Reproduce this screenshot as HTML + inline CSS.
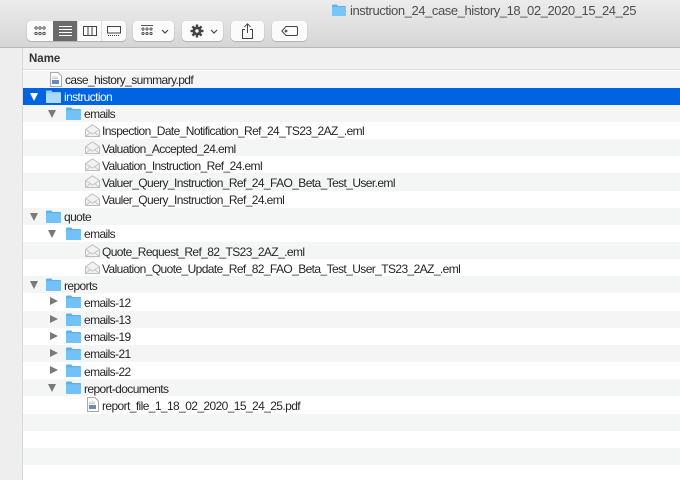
<!DOCTYPE html>
<html><head><meta charset="utf-8">
<style>
*{margin:0;padding:0;box-sizing:border-box}
body{width:680px;height:480px;overflow:hidden;font-family:"Liberation Sans",Arial,sans-serif;background:#fff;position:relative;font-size:12px;color:#262626}
#tb{position:absolute;left:0;top:0;width:680px;height:48px;background:linear-gradient(#ececec,#d6d6d6);border-bottom:1px solid #b8b8b8}
.title{position:absolute;left:350px;top:3px;font-size:13px;color:#4d4d4d;letter-spacing:-0.42px}
.tfold{position:absolute;left:332px;top:4px}
.btn{position:absolute;top:21px;height:20px;background:#fbfbfb;border-radius:4px;box-shadow:0 0.5px 1px rgba(0,0,0,.35);}
.btn svg{position:absolute}
#side{position:absolute;left:0;top:48px;width:23px;height:432px;background:#eeeeee;border-right:1px solid #d8d8d8}
#hdr{position:absolute;left:23px;top:48px;width:657px;height:22px;background:#f1f1f1;border-bottom:1px solid #dcdcdc}
#hdr span{position:absolute;left:6px;top:5px;font-size:11.5px;font-weight:bold;color:#333}
.row{position:absolute;left:23px;width:657px;height:17.15px}
.g{background:#f4f5f5}
.sel{background:#0063e1;color:#fff}
.row span{position:absolute;top:2.5px;white-space:nowrap;letter-spacing:-0.6px}
.row svg{position:absolute}
.tri{position:absolute;top:5px;width:0;height:0;border-left:4.5px solid transparent;border-right:4.5px solid transparent;border-top:8px solid #7a7a7a}
.sel .tri{border-top-color:#fff}
.trr{position:absolute;top:4px;width:0;height:0;border-top:4.5px solid transparent;border-bottom:4.5px solid transparent;border-left:8px solid #7a7a7a}
</style></head><body>
<div id="tb">
<svg class="tfold" width="14" height="12" viewBox="0 0 14 12"><path d="M0 1.5Q0 0.5 1 0.5H5L6 2H13Q14 2 14 3V11Q14 12 13 12H1Q0 12 0 11Z" fill="#5db5ef"/><rect x="0" y="3" width="14" height="9" rx="1" fill="#78c6f6"/></svg>
<div class="title">instruction_24_case_history_18_02_2020_15_24_25</div>
<div class="btn" style="left:27px;width:99px">
<svg style="left:7px;top:5px" width="12" height="10" viewBox="0 0 12 10" fill="none" stroke="#444" stroke-width="0.9"><circle cx="2" cy="2" r="1.2"/><circle cx="6" cy="2" r="1.2"/><circle cx="10" cy="2" r="1.2"/><circle cx="2" cy="7.5" r="1.2"/><circle cx="6" cy="7.5" r="1.2"/><circle cx="10" cy="7.5" r="1.2"/></svg>
<div style="position:absolute;left:26px;top:0;width:24px;height:20px;background:#6b6b6b"></div>
<svg style="left:32px;top:5px" width="13" height="10" viewBox="0 0 13 10" stroke="#fff" stroke-width="1"><path d="M0 0.5H13M0 3.5H13M0 6.5H13M0 9.5H13"/></svg>
<svg style="left:56px;top:5px" width="14" height="10" viewBox="0 0 14 10" fill="none" stroke="#444" stroke-width="1"><rect x="0.5" y="0.5" width="13" height="9"/><path d="M5 0.5V9.5M9 0.5V9.5"/></svg>
<svg style="left:80px;top:5px" width="14" height="11" viewBox="0 0 14 11" fill="none" stroke="#444" stroke-width="1"><rect x="0.5" y="0.5" width="13" height="6.5"/><path d="M1 9.5H13" stroke-dasharray="1 1"/></svg>
<div style="position:absolute;left:50px;top:0;width:1px;height:20px;background:#ddd"></div>
<div style="position:absolute;left:74px;top:0;width:1px;height:20px;background:#ddd"></div>
</div>
<div class="btn" style="left:133px;width:41px">
<svg style="left:8px;top:4px" width="12" height="12" viewBox="0 0 12 12" fill="none" stroke="#444" stroke-width="0.9"><path d="M0 0.5H12"/><circle cx="2" cy="4" r="1.1"/><circle cx="6" cy="4" r="1.1"/><circle cx="10" cy="4" r="1.1"/><circle cx="2" cy="8.5" r="1.1"/><circle cx="6" cy="8.5" r="1.1"/><circle cx="10" cy="8.5" r="1.1"/></svg>
<svg style="left:28px;top:8px" width="8" height="5" viewBox="0 0 8 5" fill="none" stroke="#444" stroke-width="1.2"><path d="M1 1L4 4L7 1"/></svg>
</div>
<div class="btn" style="left:182px;width:41px">
<svg style="left:8px;top:3px" width="14" height="14" viewBox="0 0 14 14"><g fill="#444"><circle cx="7" cy="7" r="4.5"/><rect x="5.8" y="0.5" width="2.4" height="13"/><rect x="0.5" y="5.8" width="13" height="2.4"/><rect x="5.8" y="0.5" width="2.4" height="13" transform="rotate(45 7 7)"/><rect x="5.8" y="0.5" width="2.4" height="13" transform="rotate(-45 7 7)"/></g><circle cx="7" cy="7" r="1.7" fill="#fbfbfb"/></svg>
<svg style="left:28px;top:8px" width="8" height="5" viewBox="0 0 8 5" fill="none" stroke="#444" stroke-width="1.2"><path d="M1 1L4 4L7 1"/></svg>
</div>
<div class="btn" style="left:231px;width:33px">
<svg style="left:10px;top:2px" width="13" height="16" viewBox="0 0 13 16" fill="none" stroke="#444" stroke-width="1"><path d="M4 6.5H1.5V15.5H11.5V6.5H9M6.5 10V1M3.5 3.8L6.5 0.8L9.5 3.8"/></svg>
</div>
<div class="btn" style="left:272px;width:35px">
<svg style="left:9px;top:5px" width="17" height="10" viewBox="0 0 17 10" fill="none" stroke="#444" stroke-width="1"><path d="M5 0.5H15Q16.5 0.5 16.5 2V8Q16.5 9.5 15 9.5H5L0.8 5Z"/><circle cx="5" cy="5" r="0.9"/></svg>
</div>
</div>
<div id="side"></div>
<div id="hdr"><span>Name</span></div>

<svg width="0" height="0" style="position:absolute">
<defs>
<symbol id="fold" viewBox="0 0 15 13"><path d="M0 1.5Q0 0.5 1 0.5H5.5L6.5 2H14Q15 2 15 3V12Q15 13 14 13H1Q0 13 0 12Z" fill="#5db2ec"/><rect x="0" y="3.2" width="15" height="9.8" rx="0.8" fill="#74c2f5"/></symbol>
<symbol id="foldS" viewBox="0 0 15 13"><path d="M0 1.5Q0 0.5 1 0.5H5.5L6.5 2H14Q15 2 15 3V12Q15 13 14 13H1Q0 13 0 12Z" fill="#8fcdf7"/><rect x="0" y="3.2" width="15" height="9.8" rx="0.8" fill="#a9dafa"/></symbol>
<symbol id="env" viewBox="0 0 15 13"><path d="M0.5 5.5L7.5 0.8L14.5 5.5V12.5H0.5Z" fill="#f2f2f2" stroke="#bdbdbd"/><path d="M0.5 5.5L7.5 10L14.5 5.5M0.5 12.5L5.5 8.5M14.5 12.5L9.5 8.5" fill="none" stroke="#c4c4c4"/></symbol>
<symbol id="pdf" viewBox="0 0 12 15"><path d="M0.5 0.5H8L11.5 4V14.5H0.5Z" fill="#fff" stroke="#aaa"/><rect x="2" y="8" width="7" height="4" fill="#6b8bb5"/><path d="M2 5H8M2 6.5H8" stroke="#ccc"/></symbol>
</defs></svg>

<div class="row g" style="top:70.5px"><svg style="left:27px;top:1px" width="12" height="15"><use href="#pdf"/></svg><span style="left:42px">case_history_summary.pdf</span></div>
<div class="row sel" style="top:87.65px"><div class="tri" style="left:7px"></div><svg style="left:23px;top:2px" width="15" height="13"><use href="#foldS"/></svg><span style="left:41px">instruction</span></div>
<div class="row g" style="top:104.8px"><div class="tri" style="left:25px"></div><svg style="left:43px;top:2px" width="15" height="13"><use href="#fold"/></svg><span style="left:61px">emails</span></div>
<div class="row" style="top:121.95px"><svg style="left:62px;top:2px" width="15" height="13"><use href="#env"/></svg><span style="left:79px">Inspection_Date_Notification_Ref_24_TS23_2AZ_.eml</span></div>
<div class="row g" style="top:139.1px"><svg style="left:62px;top:2px" width="15" height="13"><use href="#env"/></svg><span style="left:79px">Valuation_Accepted_24.eml</span></div>
<div class="row" style="top:156.25px"><svg style="left:62px;top:2px" width="15" height="13"><use href="#env"/></svg><span style="left:79px">Valuation_Instruction_Ref_24.eml</span></div>
<div class="row g" style="top:173.4px"><svg style="left:62px;top:2px" width="15" height="13"><use href="#env"/></svg><span style="left:79px">Valuer_Query_Instruction_Ref_24_FAO_Beta_Test_User.eml</span></div>
<div class="row" style="top:190.55px"><svg style="left:62px;top:2px" width="15" height="13"><use href="#env"/></svg><span style="left:79px">Vauler_Query_Instruction_Ref_24.eml</span></div>
<div class="row g" style="top:207.7px"><div class="tri" style="left:7px"></div><svg style="left:23px;top:2px" width="15" height="13"><use href="#fold"/></svg><span style="left:41px">quote</span></div>
<div class="row" style="top:224.85px"><div class="tri" style="left:25px"></div><svg style="left:43px;top:2px" width="15" height="13"><use href="#fold"/></svg><span style="left:61px">emails</span></div>
<div class="row g" style="top:242px"><svg style="left:62px;top:2px" width="15" height="13"><use href="#env"/></svg><span style="left:79px">Quote_Request_Ref_82_TS23_2AZ_.eml</span></div>
<div class="row" style="top:259.15px"><svg style="left:62px;top:2px" width="15" height="13"><use href="#env"/></svg><span style="left:79px">Valuation_Quote_Update_Ref_82_FAO_Beta_Test_User_TS23_2AZ_.eml</span></div>
<div class="row g" style="top:276.3px"><div class="tri" style="left:7px"></div><svg style="left:23px;top:2px" width="15" height="13"><use href="#fold"/></svg><span style="left:41px">reports</span></div>
<div class="row" style="top:293.45px"><div class="trr" style="left:27px"></div><svg style="left:43px;top:2px" width="15" height="13"><use href="#fold"/></svg><span style="left:61px">emails-12</span></div>
<div class="row g" style="top:310.6px"><div class="trr" style="left:27px"></div><svg style="left:43px;top:2px" width="15" height="13"><use href="#fold"/></svg><span style="left:61px">emails-13</span></div>
<div class="row" style="top:327.75px"><div class="trr" style="left:27px"></div><svg style="left:43px;top:2px" width="15" height="13"><use href="#fold"/></svg><span style="left:61px">emails-19</span></div>
<div class="row g" style="top:344.9px"><div class="trr" style="left:27px"></div><svg style="left:43px;top:2px" width="15" height="13"><use href="#fold"/></svg><span style="left:61px">emails-21</span></div>
<div class="row" style="top:362.05px"><div class="trr" style="left:27px"></div><svg style="left:43px;top:2px" width="15" height="13"><use href="#fold"/></svg><span style="left:61px">emails-22</span></div>
<div class="row g" style="top:379.2px"><div class="tri" style="left:25px"></div><svg style="left:43px;top:2px" width="15" height="13"><use href="#fold"/></svg><span style="left:61px">report-documents</span></div>
<div class="row" style="top:396.35px"><svg style="left:64px;top:1px" width="12" height="15"><use href="#pdf"/></svg><span style="left:79px">report_file_1_18_02_2020_15_24_25.pdf</span></div>
<div class="row g" style="top:413.5px"></div>
<div class="row" style="top:430.65px"></div>
<div class="row g" style="top:447.8px"></div>
<div class="row" style="top:464.95px"></div>
</body></html>
